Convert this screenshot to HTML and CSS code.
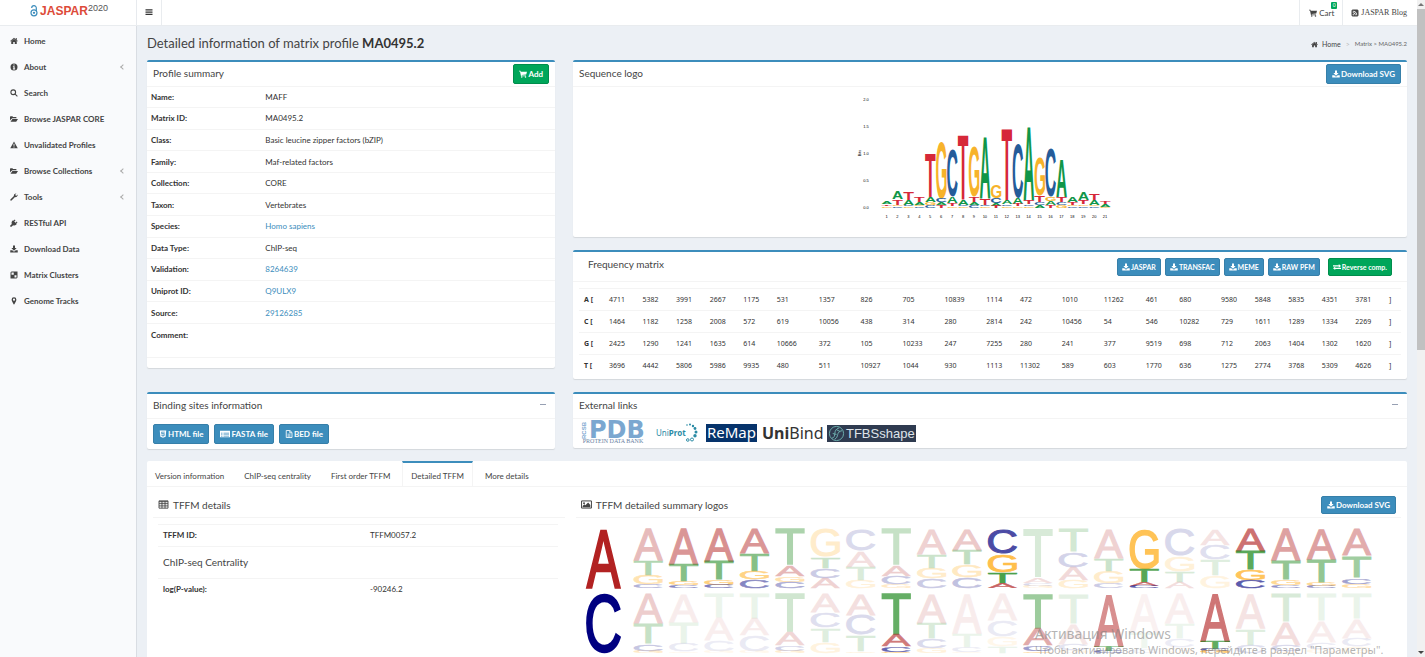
FILE: index.html
```html
<!DOCTYPE html>
<html lang="en">
<head>
<meta charset="utf-8">
<title>JASPAR 2020 - MA0495.2</title>
<link rel="stylesheet" href="styles.css">
</head>
<body>
<svg class="sprite" aria-hidden="true">
  <symbol id="i-lock" viewBox="0 0 16 26"><g fill="none" stroke="#3c8dbc" stroke-width="2.6"><circle cx="8" cy="17" r="6.5"/><path d="M3 6.500A5 5 0 0 1 13 6.500V14"/></g><circle cx="8" cy="17" r="2.500" fill="#3c8dbc"/></symbol>
  <symbol id="i-bars" viewBox="0 0 16 16"><path d="M1 2.500h14v2.300H1zM1 7h14v2.300H1zM1 11.500h14v2.300H1z"/></symbol>
  <symbol id="i-home" viewBox="0 0 16 16"><path d="M8 4 2.500 8.700V14h4v-4h3v4h4V8.700zM8 1.500.3 8l1 1.100L8 3.500l6.700 5.600 1-1.100L13.500 6V2.200h-2v2.200z"/></symbol>
  <symbol id="i-info" viewBox="0 0 16 16"><path fill-rule="evenodd" d="M8 1a7 7 0 1 0 0 14A7 7 0 0 0 8 1zM6.800 3h2.400v2.200H6.800zM5.800 6.500h3.400V11h1.100v1.800H5.800V11h1.100V8.200H5.800z"/></symbol>
  <symbol id="i-search" viewBox="0 0 16 16"><circle cx="6.500" cy="6.500" r="4.700" fill="none" stroke="currentColor" stroke-width="2.200"/><path d="m9.500 11 1.500-1.500 4.500 4.500-1.500 1.500z"/></symbol>
  <symbol id="i-folder" viewBox="0 0 16 16"><path d="M0 11V3.500L1 2.500h4l1 1.500h6l1 1v1.700H4.500L1.500 9zM1 13.500 4.800 8H16l-3.600 5.500z"/></symbol>
  <symbol id="i-warn" viewBox="0 0 16 16"><path fill-rule="evenodd" d="M8 1 .5 14.500h15zM7 5.500h2l-.3 4.500H7.300zM7 11h2v2H7z"/></symbol>
  <symbol id="i-wrench" viewBox="0 0 16 16"><path d="m.8 13 7-7A4.400 4.400 0 0 1 13 1l-2.300 2.200.3 1.900 1.900.3L15.200 3A4.400 4.400 0 0 1 10 8.200l-7 7c-1.300 1-3.200-.8-2.200-2.200z"/></symbol>
  <symbol id="i-plug" viewBox="0 0 16 16"><path d="M9.500 1.200 11 2.600 8.500 5l2.600 2.500L13.500 5 15 6.500 12.500 9l1 1-1 1c-2 2-4.500 2.300-6.300 1.300L3 15.500H.5V13l3.200-3.200C2.700 8 3 5.500 5 3.500l1-1 1 1z"/></symbol>
  <symbol id="i-down" viewBox="0 0 16 16"><path d="M6 1h4v5h3.300L8 11.300 2.700 6H6zM.5 10.500h4L8 13.500l3.500-3h4V15H.5z"/></symbol>
  <symbol id="i-matrix" viewBox="0 0 16 16"><path fill-rule="evenodd" d="M3 1h12v12l-2 2H1V3zM3 3v4.500h4.500V3zM9 8.500V13h4V8.500z"/></symbol>
  <symbol id="i-pin" viewBox="0 0 16 16"><path fill-rule="evenodd" d="M8 .5a4.800 4.800 0 0 0-4.800 4.800C3.200 7.500 6 12 8 15.500c2-3.500 4.800-8 4.800-10.200A4.800 4.800 0 0 0 8 .5zM8 3.200a2.200 2.200 0 1 1 0 4.400 2.200 2.200 0 0 1 0-4.400z"/></symbol>
  <symbol id="i-cart" viewBox="0 0 16 16"><path d="M0 1.500h3l.5 2H16L14.500 9 5.300 10l.2 1H14v1.500H4L2 3H0z"/><circle cx="5.500" cy="14" r="1.500"/><circle cx="13" cy="14" r="1.500"/></symbol>
  <symbol id="i-rss" viewBox="0 0 16 16"><path fill-rule="evenodd" d="M3 1h10l2 2v10l-2 2H3l-2-2V3zM3.500 3.500V5c4 0 7.500 3 7.500 7.500h1.500c0-5-4-9-9-9zm0 3.200v1.500c2.500 0 4.300 2 4.300 4.300h1.500c0-3.300-2.500-5.800-5.800-5.800zM3.500 10v2.500H6A2.500 2.500 0 0 0 3.500 10z"/></symbol>
  <symbol id="i-html" viewBox="0 0 16 16"><path fill-rule="evenodd" d="M1.500 1h13l-1.200 12.500L8 15.500l-5.300-2zM4.500 3.500l.4 5h4.600l-.2 2-1.300.4-1.400-.4V9.700H5l.2 2.200 2.800.9 2.800-.9.500-5.200H6.300l-.1-1.500h5.300l.1-1.700z"/></symbol>
  <symbol id="i-card" viewBox="0 0 20 16"><path fill-rule="evenodd" d="M0 1.500h20v13H0zM2 5.500v1.500h3V5.500zm5 0V7h11V5.500zM2 9v1.300h3V9zm5 0v1.300h11V9zM2 12v1h3v-1zm5 0v1h11v-1z"/></symbol>
  <symbol id="i-file" viewBox="0 0 16 16"><path d="M2.500 1h7.300L14 5v10H2.500zM9.500 1.500v4h4" fill="none" stroke="currentColor" stroke-width="1.700"/><path d="M5 7.500h6v1.200H5zM5 9.700h6v1.200H5zM5 12h6v1H5z"/></symbol>
  <symbol id="i-table" viewBox="0 0 18 16"><path d="M1 1.500h16v13H1zM1 3h16M1 6.500h16M1 10.500h16M6.300 2v12.500M11.700 2v12.500" fill="none" stroke="currentColor" stroke-width="1.600"/></symbol>
  <symbol id="i-image" viewBox="0 0 20 16"><path d="M1 1.500h18v13H1z" fill="none" stroke="currentColor" stroke-width="1.800"/><circle cx="5.500" cy="5.500" r="1.700"/><path d="M3 13v-2.500l3-3 2 2 5-5 4 4.500v4z"/></symbol>
  <symbol id="i-swap" viewBox="0 0 18 16"><path d="M0 4h13V1.500L18 5.500l-5 4V7H0zM18 9.500H5V7L0 11l5 4v-2.500h13z"/></symbol>
</svg>

<div class="page">
  <header class="topbar">
    <a class="brand" href="#"><svg class="brand-lock"><use href="#i-lock"/></svg><b>JASPAR</b><span class="year">2020</span></a>
    <button class="toggle" aria-label="Toggle navigation"><svg class="icon"><use href="#i-bars"/></svg></button>
    <nav class="topnav">
      <a class="cart" href="#"><svg class="icon"><use href="#i-cart"/></svg><span>Cart</span><span class="badge">0</span></a>
      <a class="blog" href="#"><svg class="icon"><use href="#i-rss"/></svg><span>JASPAR Blog</span></a>
    </nav>
  </header>

  <nav class="sidebar">
    <a href="#"><svg class="icon"><use href="#i-home"/></svg><span>Home</span></a>
    <a href="#" class="tree"><svg class="icon"><use href="#i-info"/></svg><span>About</span></a>
    <a href="#"><svg class="icon"><use href="#i-search"/></svg><span>Search</span></a>
    <a href="#"><svg class="icon"><use href="#i-folder"/></svg><span>Browse JASPAR CORE</span></a>
    <a href="#"><svg class="icon"><use href="#i-warn"/></svg><span>Unvalidated Profiles</span></a>
    <a href="#" class="tree"><svg class="icon"><use href="#i-folder"/></svg><span>Browse Collections</span></a>
    <a href="#" class="tree"><svg class="icon"><use href="#i-wrench"/></svg><span>Tools</span></a>
    <a href="#"><svg class="icon"><use href="#i-plug"/></svg><span>RESTful API</span></a>
    <a href="#"><svg class="icon"><use href="#i-down"/></svg><span>Download Data</span></a>
    <a href="#"><svg class="icon"><use href="#i-matrix"/></svg><span>Matrix Clusters</span></a>
    <a href="#"><svg class="icon"><use href="#i-pin"/></svg><span>Genome Tracks</span></a>
  </nav>

  <main class="content">
    <div class="heading">
      <h1>Detailed information of matrix profile <b>MA0495.2</b></h1>
      <div class="crumbs"><a href="#"><svg class="icon"><use href="#i-home"/></svg>Home</a><span class="sep">&gt;</span><span class="trail">Matrix &gt; MA0495.2</span></div>
    </div>

    <div class="row">
      <div class="col-left">
        <section class="box">
          <div class="box-head"><h2>Profile summary</h2><button class="btn green"><svg class="icon"><use href="#i-cart"/></svg>Add</button></div>
          <div class="summary-body">
          <table class="summary">
            <tr><th scope="row">Name:</th><td>MAFF</td></tr>
            <tr><th scope="row">Matrix ID:</th><td>MA0495.2</td></tr>
            <tr><th scope="row">Class:</th><td>Basic leucine zipper factors (bZIP)</td></tr>
            <tr><th scope="row">Family:</th><td>Maf-related factors</td></tr>
            <tr><th scope="row">Collection:</th><td>CORE</td></tr>
            <tr><th scope="row">Taxon:</th><td>Vertebrates</td></tr>
            <tr><th scope="row">Species:</th><td><a href="#">Homo sapiens</a></td></tr>
            <tr><th scope="row">Data Type:</th><td>ChIP-seq</td></tr>
            <tr><th scope="row">Validation:</th><td><a href="#">8264639</a></td></tr>
            <tr><th scope="row">Uniprot ID:</th><td><a href="#">Q9ULX9</a></td></tr>
            <tr><th scope="row">Source:</th><td><a href="#">29126285</a></td></tr>
            <tr class="comment"><th scope="row">Comment:</th><td></td></tr>
          </table>
          </div>
        </section>
      </div>
      <div class="col-right">
        <section class="box">
          <div class="box-head"><h2>Sequence logo</h2><button class="btn blue"><svg class="icon"><use href="#i-down"/></svg>Download SVG</button></div>
          <div class="logo-body"><svg id="seqlogo" viewBox="0 2 275 135" role="img" aria-label="Sequence logo of MA0495.2"></svg></div>
        </section>
        <section class="box">
          <div class="box-head matrix-head"><h2>Frequency matrix</h2>
            <div class="btns">
              <button class="btn blue small"><svg class="icon"><use href="#i-down"/></svg>JASPAR</button>
              <button class="btn blue small"><svg class="icon"><use href="#i-down"/></svg>TRANSFAC</button>
              <button class="btn blue small"><svg class="icon"><use href="#i-down"/></svg>MEME</button>
              <button class="btn blue small"><svg class="icon"><use href="#i-down"/></svg>RAW PFM</button>
              <button class="btn green small reverse"><svg class="icon"><use href="#i-swap"/></svg>Reverse comp.</button>
            </div>
          </div>
          <div class="matrix-body">
            <table class="matrix">
              <tr><th scope="row">A [</th><td>4711</td><td>5382</td><td>3991</td><td>2667</td><td>1175</td><td>531</td><td>1357</td><td>826</td><td>705</td><td>10839</td><td>1114</td><td>472</td><td>1010</td><td>11262</td><td>461</td><td>680</td><td>9580</td><td>5848</td><td>5835</td><td>4351</td><td>3781</td><td class="end">]</td></tr>
              <tr><th scope="row">C [</th><td>1464</td><td>1182</td><td>1258</td><td>2008</td><td>572</td><td>619</td><td>10056</td><td>438</td><td>314</td><td>280</td><td>2814</td><td>242</td><td>10456</td><td>54</td><td>546</td><td>10282</td><td>729</td><td>1611</td><td>1289</td><td>1334</td><td>2269</td><td class="end">]</td></tr>
              <tr><th scope="row">G [</th><td>2425</td><td>1290</td><td>1241</td><td>1635</td><td>614</td><td>10666</td><td>372</td><td>105</td><td>10233</td><td>247</td><td>7255</td><td>280</td><td>241</td><td>377</td><td>9519</td><td>698</td><td>712</td><td>2063</td><td>1404</td><td>1302</td><td>1620</td><td class="end">]</td></tr>
              <tr><th scope="row">T [</th><td>3696</td><td>4442</td><td>5806</td><td>5986</td><td>9935</td><td>480</td><td>511</td><td>10927</td><td>1044</td><td>930</td><td>1113</td><td>11302</td><td>589</td><td>603</td><td>1770</td><td>636</td><td>1275</td><td>2774</td><td>3768</td><td>5309</td><td>4626</td><td class="end">]</td></tr>
            </table>
          </div>
        </section>
      </div>
    </div>

    <div class="row tight">
      <div class="col-left">
        <section class="box">
          <div class="box-head"><h2>Binding sites information</h2><button class="collapse" aria-label="Collapse"></button></div>
          <div class="files">
            <button class="btn blue"><svg class="icon"><use href="#i-html"/></svg>HTML file</button>
            <button class="btn blue"><svg class="icon wide"><use href="#i-card"/></svg>FASTA file</button>
            <button class="btn blue"><svg class="icon"><use href="#i-file"/></svg>BED file</button>
          </div>
        </section>
      </div>
      <div class="col-right">
        <section class="box">
          <div class="box-head"><h2>External links</h2><button class="collapse" aria-label="Collapse"></button></div>
          <div class="links">
            <a class="pdb" href="#"><span class="rcsb">RCSB</span><span class="pdb-name">PDB</span><span class="pdb-sub">PROTEIN DATA BANK</span></a>
            <a class="uniprot" href="#"><span>Uni<b>Prot</b></span><svg viewBox="0 0 12 20"><g fill="#2b8ba5"><circle cx="1" cy="2" r=".8"/><circle cx="4" cy="1.500" r="1"/><circle cx="7" cy="3" r="1.200"/><circle cx="9" cy="5.500" r="1.400"/><circle cx="10" cy="9" r="1.500"/><circle cx="9" cy="12.800" r="1.700"/></g><g fill="none" stroke="#2b8ba5"><circle cx="1.800" cy="17" r="1.300"/><circle cx="6" cy="16.500" r="1.500"/></g></svg></a>
            <a class="remap" href="#">ReMap</a>
            <a class="unibind" href="#"><b>Uni</b>Bind</a>
            <a class="tfbs" href="#"><svg viewBox="0 0 18 18"><g fill="none" stroke="#6fb3b0"><circle cx="9" cy="9" r="7.500"/><path d="M4 14c6-1 0-9 8-11M7 15c5-2 1-8 8-9M5 9l4 1M9 5l4 2"/></g></svg>TFBSshape</a>
          </div>
        </section>
      </div>
    </div>

    <section class="tabs">
      <div class="tablist" role="tablist">
        <button role="tab">Version information</button><button role="tab">ChIP-seq centrality</button><button role="tab">First order TFFM</button><button role="tab" class="active" aria-selected="true">Detailed TFFM</button><button role="tab">More details</button>
      </div>
      <div class="panel">
        <div class="details">
          <div class="panel-head"><h2><svg class="icon big"><use href="#i-table"/></svg>TFFM details</h2></div>
          <table class="tffm">
            <tr><th scope="row">TFFM ID:</th><td>TFFM0057.2</td></tr>
            <tr class="sub"><td colspan="2">ChIP-seq Centrality</td></tr>
            <tr><th scope="row">log(P-value):</th><td>-90246.2</td></tr>
          </table>
        </div>
        <div class="logos">
          <div class="panel-head"><h2><svg class="icon big"><use href="#i-image"/></svg>TFFM detailed summary logos</h2><button class="btn blue short"><svg class="icon"><use href="#i-down"/></svg>Download SVG</button></div>
          <svg id="tffmlogo" viewBox="0 0 800 140" role="img" aria-label="TFFM detailed summary logos"></svg>
        </div>
      </div>
    </section>
  </main>

  <div class="scroll" aria-hidden="true"><span class="up"></span><span class="thumb"></span><span class="down"></span></div>
</div>
<div class="watermark"><strong>Активация Windows</strong><span>Чтобы активировать Windows, перейдите в раздел "Параметры".</span></div>
<script src="logos.js"></script>
</body>
</html>
```
FILE: styles.css
```css
* { box-sizing: border-box; }
html, body { height: 100%; margin: 0; }
body { overflow: hidden; background: #ecf0f5; color: #333; font: 8px/12px Lato, "Noto Sans", sans-serif; }
a { color: #3c8dbc; text-decoration: none; }
button { font: inherit; color: inherit; border: 0; background: none; padding: 0; margin: 0; }
h1, h2 { margin: 0; font-weight: 400; }
table { border-collapse: collapse; width: 100%; }
th { text-align: left; font-weight: 700; }
th, td { padding: 0; }
.sprite { display: none; }
.icon { width: 8px; height: 8px; fill: currentColor; flex: none; }
.icon.wide { width: 10px; }
.icon.big { width: 11px; height: 9px; }

.page { display: grid; grid-template: 26px 1fr / 137px 1fr 8px; height: 100vh; }
.topbar { grid-column: 1 / 3; display: flex; background: #fff; border-bottom: 1px solid #e9ecef; }
.brand { display: flex; justify-content: center; align-items: center; width: 137px; padding: 0 0 4px 2px; border-right: 1px solid #e7eaee; color: #dd4b39; font: 12px/20px "Liberation Sans", Arial, sans-serif; }
.brand-lock { width: 8px; height: 12px; margin-right: 2px; }
.year { color: #555; font-size: 9px; align-self: flex-start; line-height: 16px; }
.toggle { width: 25px; border-right: 1px solid #e9ecef; color: #333; }
.topnav { display: flex; margin-left: auto; }
.topnav a { display: flex; align-items: center; gap: 2px; color: #444; border-left: 1px solid #e9ecef; padding: 0 9px; }
.cart { position: relative; width: 43px; }
.badge { position: absolute; top: 2px; right: 5px; width: 6px; height: 7px; border-radius: 1px; background: #00a65a; color: #fff; font-size: 5px; line-height: 7px; text-align: center; }
.topnav .blog { font: 8px/12px "Liberation Serif", serif; padding: 0 10px 0 8px; }

.sidebar { background: #f9fafc; border-right: 1px solid #d9dde3; padding-top: 2px; }
.sidebar a { display: flex; align-items: center; gap: 6px; height: 26px; padding: 0 11px 0 10px; color: #444; font-weight: 700; }
.tree::after { content: ""; width: 3px; height: 3px; margin-left: auto; border: solid #aaa; border-width: 0 0 1px 1px; transform: rotate(45deg); }

.content { min-width: 0; overflow: hidden; padding: 0 10px; }
.heading { display: flex; justify-content: space-between; align-items: center; height: 34px; }
h1 { font-size: 13px; line-height: 18px; color: #444; }
h1 b { color: #333; }
.crumbs { display: flex; align-items: center; gap: 5px; font-size: 7px; color: #666; padding-top: 2px; }
.crumbs a { display: flex; align-items: center; gap: 4px; color: #444; }
.crumbs .icon { width: 7px; height: 7px; }
.crumbs .sep { color: #bbb; }
.trail { font-size: 6px; }

.row { display: flex; margin: 0 -9px; }
.col-left { width: 33.333%; padding: 0 9px; }
.col-right { width: 66.667%; padding: 0 9px; }
.box { background: #fff; border-top: 2px solid #3c8dbc; border-radius: 2px; margin-bottom: 13px; box-shadow: 0 1px 1px rgba(0,0,0,.1); }
.tight .box { margin-bottom: 12px; }
.box-head { display: flex; justify-content: space-between; align-items: center; height: 25px; padding: 0 6px; border-bottom: 1px solid #f4f4f4; }
.box-head h2 { padding-bottom: 2px; }
h2 { display: flex; align-items: center; gap: 4px; font-size: 10px; line-height: 12px; color: #444; }
.btn { display: inline-flex; align-items: center; justify-content: center; gap: 1px; height: 20px; padding: 0 5px; border-radius: 2px; color: #fff; font-size: 8px; line-height: 10px; font-weight: 700; white-space: nowrap; }
.blue { background: #3c8dbc; border: 1px solid #367fa9; }
.green { background: #00a65a; border: 1px solid #008d4c; }
.small { height: 18px; padding: 0 4px; font-size: 7px; }
.short { height: 18px; }

.summary-body { padding-bottom: 10px; }
.summary { height: 271px; }
.summary tr, .matrix tr { border-bottom: 1px solid #f4f4f4; }
.summary th { width: 29%; padding-left: 4px; }
.summary th, .summary td, .tffm th, .tffm td { font-size: 8px; line-height: 10px; }
.summary .comment { height: 34px; }
.comment th { vertical-align: top; padding-top: 6px; }

.logo-body { height: 150px; padding-left: 277px; }
#seqlogo { width: 275px; height: 135px; display: block; overflow: visible; }
.matrix-head { height: 30px; padding: 0 15px; }
.btns { display: flex; gap: 4px; }
.reverse { margin-left: 4px; }
.matrix-head h2 { padding-bottom: 6px; }
.matrix-body { padding: 6px 6px 2px; }
.matrix { border-top: 1px solid #f4f4f4; }
.matrix tr:last-child { border-bottom: 0; }
.matrix th, .matrix td { font: 7px/10px "Noto Sans", sans-serif; }
.matrix th { font-weight: 700; width: 30px; padding-left: 5px; height: 22px; }
.matrix .end { width: 12px; }

.collapse { width: 12px; height: 14px; }
.collapse::before { content: ""; display: block; width: 6px; height: 1px; margin: 0 auto 2px; background: #97a0b3; }
.files { display: flex; gap: 5px; padding: 5px 6px; height: 30px; }
.links { display: flex; align-items: center; height: 29px; padding: 0 6px; }
.pdb { display: grid; grid-template: 16px 5px / 10px 58px; color: #7ba7d0; }
.rcsb { font: 700 6px/10px "Liberation Sans", sans-serif; writing-mode: vertical-rl; rotate: 180deg; text-align: center; }
.pdb-name { font: 700 24px/15px "DejaVu Sans", sans-serif; }
.pdb-sub { grid-column: 1 / 3; font: 6px/5px "Liberation Serif", serif; text-align: center; white-space: nowrap; color: #6b7fa3; }
.uniprot { display: flex; align-items: center; margin-left: 9px; width: 40px; font: 8px/12px "Noto Sans", sans-serif; color: #2b8ba5; }
.uniprot svg { width: 12px; height: 20px; flex: none; }
.remap { margin-left: 10px; width: 51px; height: 18px; background: #06336b; color: #fff; font: 15px/17px "Noto Sans", sans-serif; text-align: center; }
.unibind { margin-left: 5px; width: 61px; color: #333; font: 16px/18px "Noto Sans", sans-serif; }
.tfbs { display: flex; align-items: center; gap: 1px; margin-left: 4px; width: 89px; height: 17px; padding-left: 1px; background: #2f3b50; color: #dfe4ea; font: 13px/17px "Liberation Sans", Arial, sans-serif; }
.tfbs svg { width: 17px; height: 17px; flex: none; }

.tabs { background: #fff; min-height: 210px; border-radius: 2px; }
.tablist { display: flex; height: 26px; border-bottom: 1px solid #f4f4f4; }
.tablist button { padding: 4px 8px 0; margin-right: 4px; border-top: 2px solid transparent; font-size: 8px; line-height: 10px; color: #444; }
.tablist .active { border-top-color: #3c8dbc; border-left: 1px solid #f4f4f4; border-right: 1px solid #f4f4f4; }
.panel { display: flex; padding: 6px 6px 0; }
.details { width: 33%; }
.logos { flex: 1; min-width: 0; margin-left: 11px; }
.panel-head { display: flex; justify-content: space-between; align-items: center; height: 25px; padding: 0 5px; border-bottom: 1px solid #f4f4f4; }
.tffm { width: calc(100% - 12px); margin: 6px 5px 0; border-top: 1px solid #f4f4f4; }
.tffm th { width: 53%; height: 22px; padding-left: 5px; }
.tffm .sub td { height: 32px; padding: 0 5px; border: solid #f4f4f4; border-width: 1px 0; font-size: 10px; color: #444; }
#tffmlogo { display: block; width: 800px; height: 140px; overflow: visible; }

.scroll { grid-column: 3; grid-row: 1 / 3; display: grid; grid-template-rows: 9px 341px 1fr 9px; background: #f1f1f1; }
.scroll .thumb { background: #c1c1c1; }
.scroll .up, .scroll .down { align-self: center; justify-self: center; border: 3px solid transparent; border-top-width: 0; border-bottom: 3px solid #777; }
.scroll .down { grid-row: 4; border-top: 3px solid #444; border-bottom: 0; }
.watermark { position: absolute; left: 1035px; bottom: 0; display: flex; flex-direction: column; color: rgba(130,130,130,.6); font: 11px/14px "Noto Sans", sans-serif; white-space: nowrap; }
.watermark strong { font-weight: 400; font-size: 14px; line-height: 19px; }
```
FILE: logos.js
```js
// Sequence logos: every stack is one position, every letter's height its share.
const NS = "http://www.w3.org/2000/svg";
const FONT = '"Liberation Sans", Arial, sans-serif';
const pen = document.createElement("canvas").getContext("2d");

function bounds(ch, weight, stroke) {
  pen.font = `${weight} 100px ${FONT}`;
  const m = pen.measureText(ch), s = stroke / 2;
  return { left: -m.actualBoundingBoxLeft - s, right: m.actualBoundingBoxRight + s,
           top: m.actualBoundingBoxAscent + s, bottom: m.actualBoundingBoxDescent + s };
}
function letter(svg, ch, x, top, w, h, fill, opacity, weight, stroke) {
  const b = bounds(ch, weight, stroke);
  const sx = w / (b.right - b.left), sy = h / (b.top + b.bottom);
  const t = document.createElementNS(NS, "text");
  t.textContent = ch;
  t.setAttribute("font-family", FONT);
  t.setAttribute("font-weight", weight);
  t.setAttribute("font-size", "100");
  t.setAttribute("fill", fill);
  if (stroke) { t.setAttribute("stroke", fill); t.setAttribute("stroke-width", stroke); }
  t.setAttribute("opacity", opacity);
  t.setAttribute("transform", `translate(${x - b.left * sx} ${top + b.top * sy}) scale(${sx} ${sy})`);
  svg.append(t);
}
function label(svg, s, x, y, rot) {
  const t = document.createElementNS(NS, "text");
  t.textContent = s;
  t.setAttribute("x", x); t.setAttribute("y", y);
  t.setAttribute("font-family", FONT);
  t.setAttribute("font-size", "4");
  t.setAttribute("text-anchor", "middle");
  if (rot) t.setAttribute("transform", `rotate(-90 ${x} ${y})`);
  svg.append(t);
}
const parse = s => s.match(/[ACGT]\d+/g).map(p => [p[0], +p.slice(1)]);

const seq = document.getElementById("seqlogo");
const seqColors = { A: "#109648", C: "#255c99", G: "#f7b32b", T: "#d62839" };
const profile = ["A8T5G5","A21T16G4C5","T24A15C4G4","T15A9G5C4","T132A15G7C9","G170C11A9T8","C140A20T8G5","T196A15C5G4","G148T16A9C7","A188T18C4G4","G40C16A8T6","T220A10C5G5","C160A18T7G5","A220T11C5G5","G115T20C8A8","C145G12A12T9","A114T15C8G9","A14T8G5C4","A21T12G5C5","T18A14G4C5","T7A8G3"];
["0.0","0.5","1.0","1.5","2.0"].forEach((s, i) => label(seq, s, 16, 124 - i * 27));
label(seq, "Bits", 11, 68, true);
profile.forEach((s, i) => {
  const cx = 36.500 + i * 10.930;
  const stack = parse(s);
  let y = 122.700 - stack.reduce((a, p) => a + p[1], 0) / 3;
  stack.forEach(([ch, n]) => { letter(seq, ch, cx - 5, y, 10.500, n / 3, seqColors[ch], 1, 700, 0); y += n / 3; });
  label(seq, i + 1, cx, 133);
});

const tffm = document.getElementById("tffmlogo");
const tffmColors = { A: "#b22222", C: "#000080", G: "#ffa500", T: "#007a00" };
const rows = [
  [["A94T45G28C11",.3],["A106T51G12C9",.47],["A98T55G14C11",.5],["A74T53G25C26",.47],["T109A33G17C19",.32],["G85T33C30A30",.2],["C66A48T40G24",.14],["T110A32C24G12",.22],["A76T41G31C30",.2],["A64T43G38C33",.24],["C75G55T32A16",.7],["T147A15C8G8",.15],["T69C46A40G23",.17],["A88T38G38C14",.2],["G120T40A10C8",.66],["C82G44T34A18",.15],["A48C45T48G37",.12],["A66T55G32C25",.64],["A95T57G17C9",.42],["A93T67G10C8",.42],["A81T66C18G13",.37]],
  [["A90T60C22G6",.22],["A85T63C25G5",.08],["T72A67C33G6",.07],["T75A50C47G6",.08],["T116A38C18G6",.18],["A56C46T42G34",.12],["A63C60T50G5",.14],["T124A34C17G3",.6],["A88T47C27G16",.14],["A118T42C14G4",.08],["A80C48G30T20",.08],["T105A50C18G5",.38],["T90A60C20G8",.1],["A158T14C6",.5],["A115T50C13",.06],["A90T45C25G18",.07],["A143T22C6G7",.62],["A105T50C23",.12],["T85A68C20G5",.15],["T80A65C20G13",.08],["T75A57C25G21",.08]]
];
rows.forEach((row, r) => {
  const top = 11 + r * 65, first = "AC"[r];
  letter(tffm, first, 10, top, 35, 59, tffmColors[first], 1, 400, 3);
  row.forEach(([s, op], i) => {
    let y = top;
    parse(s).forEach(([ch, n]) => { letter(tffm, ch, 57.500 + i * 35.430, y, 29.500, n / 3, tffmColors[ch], op, 400, 3); y += n / 3; });
  });
});
```
